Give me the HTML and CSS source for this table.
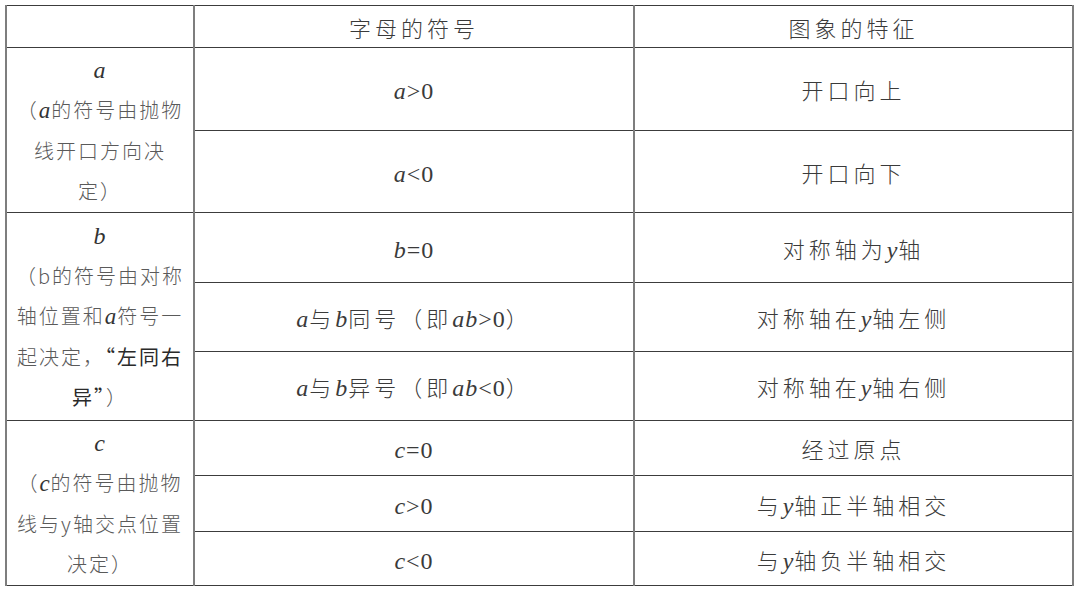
FILE: index.html
```html
<!DOCTYPE html>
<html lang="zh">
<head>
<meta charset="utf-8">
<title>二次函数系数符号与图象特征</title>
<link rel="stylesheet" href="styles.css">
</head>
<body>
<table class="tbl">
  <colgroup>
    <col class="c1"><col class="c2"><col class="c3">
  </colgroup>
  <tr class="h42">
    <td class="left"></td>
    <td class="cell">字母的符号</td>
    <td class="cell">图象的特征</td>
  </tr>
  <tr class="h83">
    <td class="left" rowspan="2"><span class="mi big">a</span><br>（<span class="mi">a</span>的符号由抛物<br>线开口方向决<br>定）</td>
    <td class="cell"><span class="m"><i>a</i>&gt;0</span></td>
    <td class="cell">开口向上</td>
  </tr>
  <tr class="h82">
    <td class="cell"><span class="m"><i>a</i>&lt;0</span></td>
    <td class="cell">开口向下</td>
  </tr>
  <tr class="h70">
    <td class="left" rowspan="3"><span class="mi big">b</span><br>（b的符号由对称<br>轴位置和<span class="mi">a</span>符号一<br>起决定，<b class="strong">“左同右<br>异”</b>）</td>
    <td class="cell"><span class="m"><i>b</i>=0</span></td>
    <td class="cell">对称轴为<span class="m"><i>y</i></span>轴</td>
  </tr>
  <tr class="h69">
    <td class="cell"><span class="m"><i>a</i></span>与<span class="m"><i>b</i></span>同号（即<span class="m"><i>ab</i>&gt;0</span>）</td>
    <td class="cell">对称轴在<span class="m"><i>y</i></span>轴左侧</td>
  </tr>
  <tr class="h69">
    <td class="cell"><span class="m"><i>a</i></span>与<span class="m"><i>b</i></span>异号（即<span class="m"><i>ab</i>&lt;0</span>）</td>
    <td class="cell">对称轴在<span class="m"><i>y</i></span>轴右侧</td>
  </tr>
  <tr class="h55">
    <td class="left" rowspan="3"><span class="mi big">c</span><br>（<span class="mi">c</span>的符号由抛物<br>线与y轴交点位置<br>决定）</td>
    <td class="cell"><span class="m"><i>c</i>=0</span></td>
    <td class="cell">经过原点</td>
  </tr>
  <tr class="h56">
    <td class="cell"><span class="m"><i>c</i>&gt;0</span></td>
    <td class="cell">与<span class="m"><i>y</i></span>轴正半轴相交</td>
  </tr>
  <tr class="h54">
    <td class="cell"><span class="m"><i>c</i>&lt;0</span></td>
    <td class="cell">与<span class="m"><i>y</i></span>轴负半轴相交</td>
  </tr>
</table>
</body>
</html>
```
FILE: styles.css
```css
html, body {
  margin: 0;
  padding: 0;
  background: #ffffff;
}
body {
  padding: 5px 0 0 5px;
  font-family: "Noto Sans CJK SC", "Liberation Serif", sans-serif;
}
.tbl {
  border-collapse: collapse;
  table-layout: fixed;
  width: 1067px;
}
.c1 { width: 188px; }
.c2 { width: 440px; }
.c3 { width: 439px; }
.tbl td {
  border-top: 1px solid #3c3c3c;
  border-bottom: 1px solid #3c3c3c;
  border-left: 2px solid #7e7e7e;
  border-right: 2px solid #7e7e7e;
  padding: 0;
  text-align: center;
  vertical-align: middle;
}
.h42 { height: 42px; }
.h83 { height: 83px; }
.h82 { height: 82px; }
.h70 { height: 70px; }
.h69 { height: 69px; }
.h55 { height: 55px; }
.h56 { height: 56px; }
.h54 { height: 54px; }
.cell {
  font-size: 22px;
  letter-spacing: 4px;
  color: #3a3a3a;
  font-weight: 300;
  padding-left: 4px;
}
.left {
  font-size: 20px;
  line-height: 40px;
  letter-spacing: 2px;
  color: #5a5a5a;
  font-weight: 300;
  padding-left: 18px;
}
.m {
  font-family: "Liberation Serif", serif;
  font-size: 24px;
  letter-spacing: 1px;
  font-weight: 400;
}
.m i { font-style: italic; }
.mi {
  font-family: "Liberation Serif", serif;
  font-style: italic;
  font-size: 23px;
  letter-spacing: 1px;
  color: #333;
}
.mi.big { font-size: 24px; }
.strong {
  font-weight: 400;
  color: #2a2a2a;
}
```
